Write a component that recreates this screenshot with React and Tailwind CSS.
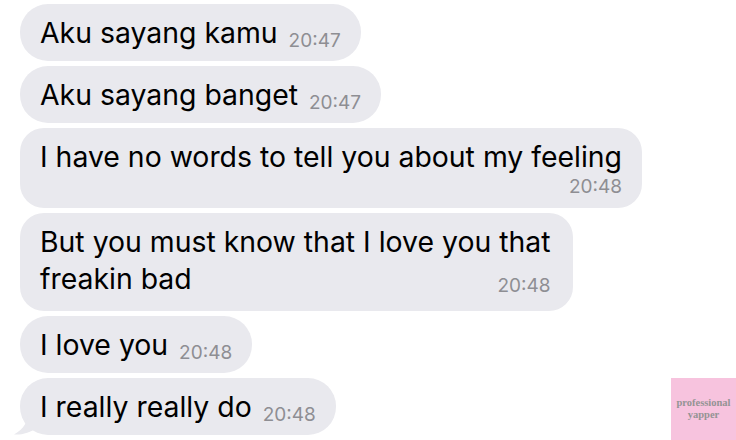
export default function App() {
  const time = "text-[19px] leading-none text-[#8e8e93] align-[-4px] ml-[11px]";
  const bubble = "rounded-[28px] bg-[#e9e9ee] pl-[20px] pr-[20px] py-[10px] text-[28.4px] leading-[37px]";
  return (
    <div
      className="relative w-[736px] h-[440px] overflow-hidden bg-white text-black"
      style={{ fontFamily: "Inter, 'Liberation Sans', sans-serif" }}
    >
      <div className="flex flex-col items-start gap-[5px] pl-[20px] pt-[4px]">
        <div className={bubble}>
          Aku sayang kamu<span className={time}>20:47</span>
        </div>
        <div className={bubble}>
          Aku sayang banget<span className={time}>20:47</span>
        </div>
        <div className="flex flex-col rounded-[24px] bg-[#e9e9ee] pl-[20px] pr-[20px] pt-[10px] pb-[9px]">
          <span className="text-[28.4px] leading-[37px]">I have no words to tell you about my feeling</span>
          <span className="self-end text-[19px] leading-[24px] text-[#8e8e93]">20:48</span>
        </div>
        <div className="flex flex-col rounded-[24px] bg-[#e9e9ee] pl-[20px] pr-[22px] py-[10px] text-[28.4px] leading-[37px]">
          <span>But you must know that I love you that</span>
          <div className="flex items-baseline justify-between">
            <span>freakin bad</span>
            <span className="relative top-[3px] text-[19px] text-[#8e8e93]">20:48</span>
          </div>
        </div>
        <div className={bubble}>
          I love you<span className={time}>20:48</span>
        </div>
        <div className={"relative " + bubble}>
          I really really do<span className={time}>20:48</span>
          <svg className="absolute left-[-6px] bottom-0" width="26" height="22" viewBox="0 0 26 22">
            <path d="M14 0 C14 8 10 16 0 21.5 C8 22 16 20 24 14 L26 0 Z" fill="#e9e9ee" />
          </svg>
        </div>
      </div>

      <div
        className="absolute right-0 bottom-0 flex h-[62px] w-[65px] flex-col items-center justify-center bg-[#f7c3de] text-[10.5px] font-bold leading-[12px] text-[#949494]"
        style={{ fontFamily: "'Liberation Serif', serif" }}
      >
        <span>professional</span>
        <span>yapper</span>
      </div>
    </div>
  );
}
